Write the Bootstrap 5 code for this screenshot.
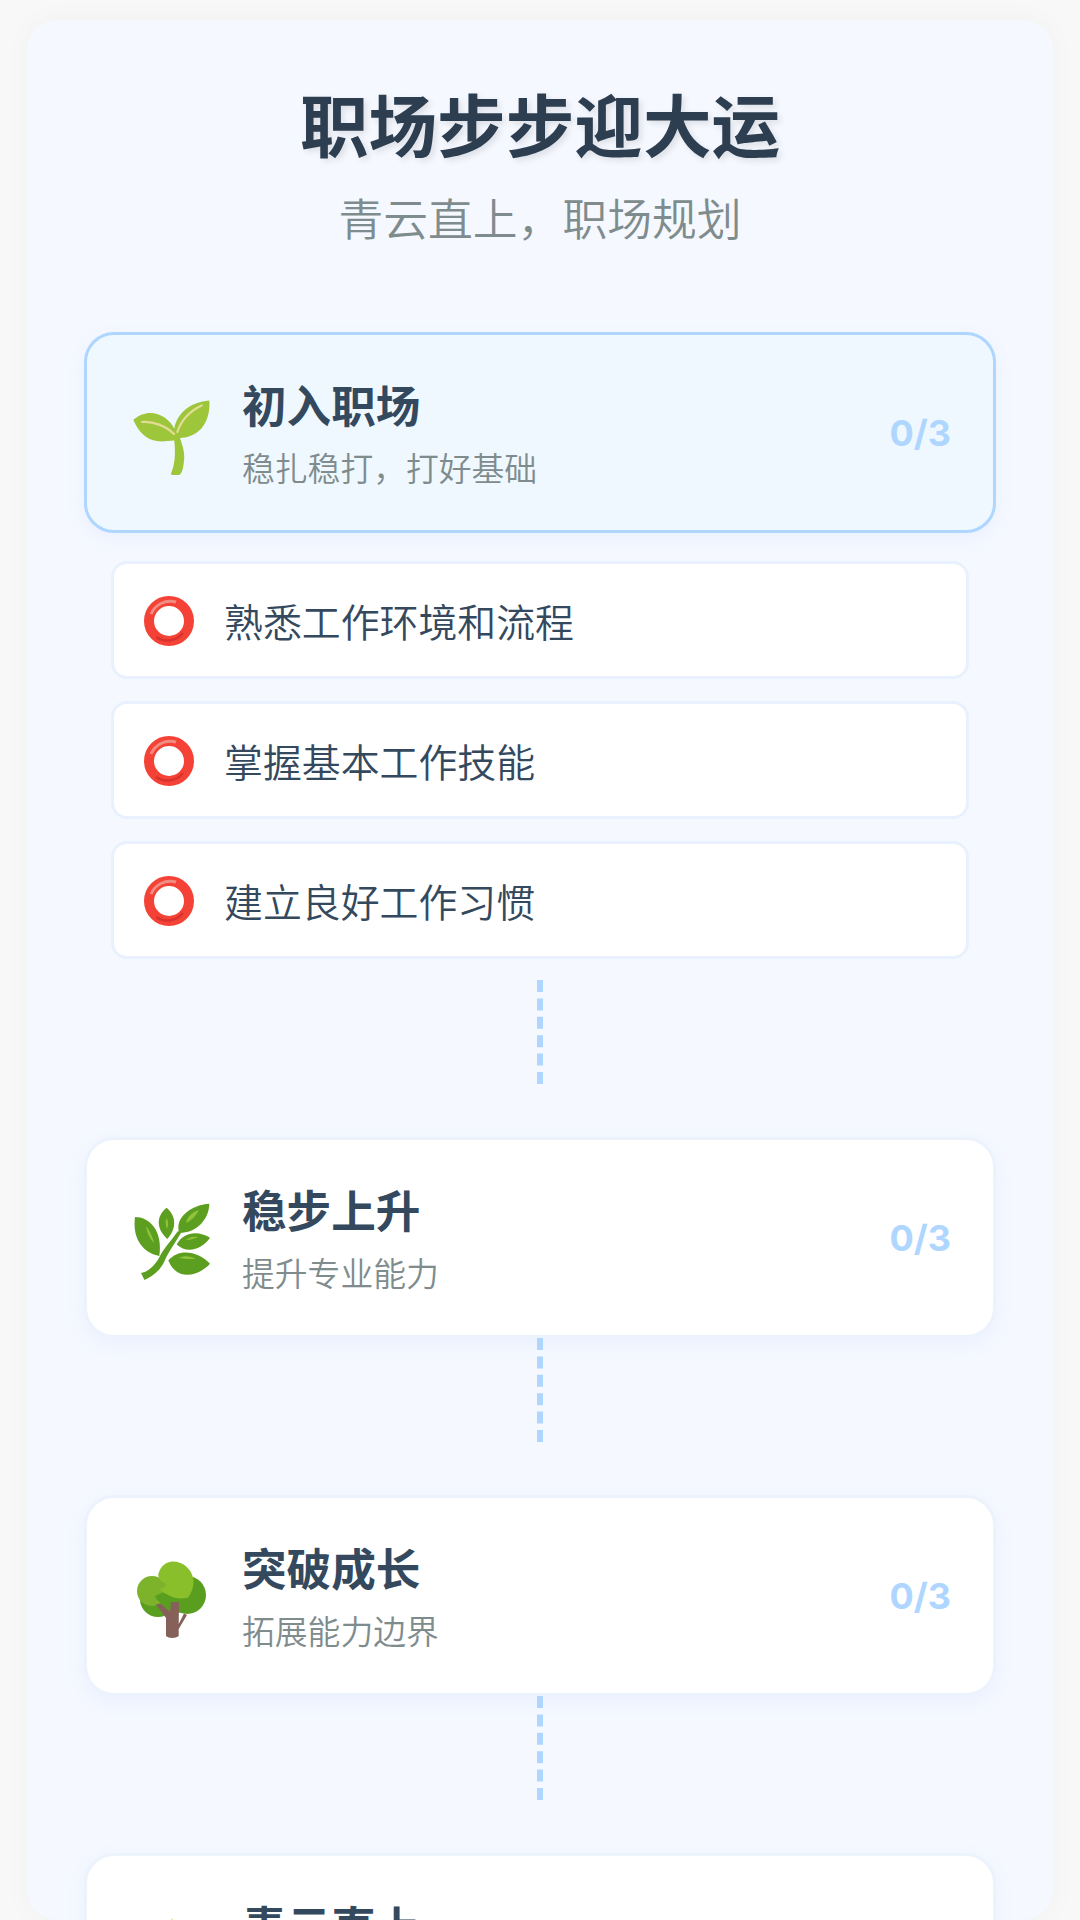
<!DOCTYPE html>
<html lang="zh-CN"><head><meta charset="utf-8">
<link href="https://cdn.jsdelivr.net/npm/bootstrap@5.3.0/dist/css/bootstrap.min.css" rel="stylesheet">
<style>
html,body{height:1920px;overflow:hidden}
body{background:#f8f8f8;font-family:"Noto Sans CJK SC","Noto Sans",sans-serif;font-weight:350;margin:0}
.shell{margin:20px 27px 0;background:#f5f8ff;border-radius:30px;padding:61px 57px 0;box-shadow:0 0 30px rgba(0,0,0,.03);height:1900px;overflow:hidden}
.ttl{font-size:68.6px;font-weight:700;color:#2c3e50;line-height:1.2;text-shadow:3px 3px 6px rgba(0,0,0,.1);margin:0 0 27px;text-align:center}
.sub{font-size:44.8px;color:#7f8c8d;line-height:1.2;text-align:center;margin:0 0 88px}
.stage{height:201px;border-radius:30px;border:3px solid #ecf3fd;background:#fff;padding:0 42px;box-shadow:0 6px 18px rgba(100,150,255,.08)}
.stage.on{background:#f0f8ff;border-color:#aed6ff}
.ico{width:84px;height:84px;flex:none;margin-right:29px}
.st{font-size:44.6px;font-weight:700;color:#34495e;line-height:1.2;margin:-2px 0 16px}
.sd{font-size:32.8px;color:#7f8c8d;line-height:1.2}
.cnt{font-family:Inter,sans-serif;font-size:36px;font-weight:700;color:#aed6ff}
.tasks{padding:28px 27px 0;display:flex;flex-direction:column;gap:22px}
.task{height:118px;background:#fff;border:3px solid #e8f1fd;border-radius:16px;padding:0 28px}
.task svg{width:54px;height:54px;flex:none;margin:2px 28px 0 0}
.task span{font-size:38.9px;color:#34495e}
.link{width:6px;height:104px;border-left:6px dashed #aed6ff;margin:0 auto 53px}
.link.first{margin-top:21px}
</style></head><body>
<div class="shell">
<h1 class="ttl">职场步步迎大运</h1>
<p class="sub">青云直上，职场规划</p>

<div class="stage on d-flex align-items-center">
<svg class="ico" viewBox="0 0 84 84"><path fill="#9dc63b" d="M4.300 28.800C10 24 16 22 21 22C32 22 41 29 45.300 37.800C47 26 58 11 80.300 9.500C81 20 79 30 72 38C66 44 58 47 51 47C54 56 56 62 55 69.500C54.500 76 53 82 51 83.500C47 85 43 84.500 41.700 83C45 76 47 66 45.300 49.500C38 50 33 51 27.700 50C18 49 9 41 4.300 28.800Z"/><path fill="none" stroke="#e3dc94" stroke-width="2.200" stroke-linecap="round" d="M13 31C24 30 37 35 45 43M48.300 41C52 30 61 20 72.700 14.500"/></svg>
<div class="flex-grow-1"><div class="st">初入职场</div><div class="sd">稳扎稳打，打好基础</div></div>
<div class="cnt">0/3</div>
</div>

<div class="tasks">
<div class="task d-flex align-items-center"><svg viewBox="0 0 54 54"><circle cx="27" cy="27" r="20" fill="none" stroke="#f44336" stroke-width="10"/><path d="M41 39A20 20 0 0 1 14 43" fill="none" stroke="#c62828" stroke-width="2.500" opacity=".6"/><path d="M9 20C13 11 23 5 34 8" fill="none" stroke="#f28b82" stroke-width="3"/></svg><span>熟悉工作环境和流程</span></div>
<div class="task d-flex align-items-center"><svg viewBox="0 0 54 54"><circle cx="27" cy="27" r="20" fill="none" stroke="#f44336" stroke-width="10"/><path d="M41 39A20 20 0 0 1 14 43" fill="none" stroke="#c62828" stroke-width="2.500" opacity=".6"/><path d="M9 20C13 11 23 5 34 8" fill="none" stroke="#f28b82" stroke-width="3"/></svg><span>掌握基本工作技能</span></div>
<div class="task d-flex align-items-center"><svg viewBox="0 0 54 54"><circle cx="27" cy="27" r="20" fill="none" stroke="#f44336" stroke-width="10"/><path d="M41 39A20 20 0 0 1 14 43" fill="none" stroke="#c62828" stroke-width="2.500" opacity=".6"/><path d="M9 20C13 11 23 5 34 8" fill="none" stroke="#f28b82" stroke-width="3"/></svg><span>建立良好工作习惯</span></div>
</div>
<div class="link first"></div>

<div class="stage d-flex align-items-center">
<svg class="ico" viewBox="0 0 84 84"><g fill="#5c9e1f"><path d="M6 21C20 21 34 34 30.300 60C15 57 3 44 6 21Z"/><path d="M37.700 11.800C46 19 49 31 38.300 43C27 33 27 20 37.700 11.800Z"/><path d="M80.300 7.800C80 24 67 37 50.300 37C45 22 62 9 80.300 7.800Z"/><path d="M81 41.800C74 52 59 59 47.700 48.500C55 35 70 35 81 41.800Z"/><path d="M81 67.800C70 80 48 86 39.300 64.500C50 52 69 55 81 67.800Z"/><path d="M12 77L15.500 84C24 80 32 74 36 64C39 57 44 50 52 37L49 35C42 45 35 52 31 60C27 68 20 76 12 77Z"/></g><g fill="#8fc33a"><path d="M17 30C20 34 24 41 25 47C21 43 18 37 17 30Z"/><path d="M37.500 22C39.500 25 39.500 29 38 33C36.500 29 36 25 37.500 22Z"/><path d="M70 14C63 16 58 21 57 27C62 25 67 20 70 14Z"/><path d="M57 44C60 41 65 40 69 41C65 43 61 44 57 44Z"/><path d="M50 62C55 59 62 60 67 63C61 63 55 63 50 62Z"/></g></svg>
<div class="flex-grow-1"><div class="st">稳步上升</div><div class="sd">提升专业能力</div></div>
<div class="cnt">0/3</div>
</div>
<div class="link"></div>

<div class="stage d-flex align-items-center">
<svg class="ico" viewBox="0 0 84 84"><ellipse cx="43" cy="42" rx="33" ry="17" fill="#5a9e1f"/><circle cx="29" cy="45" r="18" fill="#5a9e1f"/><circle cx="58" cy="41" r="19" fill="#5a9e1f"/><circle cx="23" cy="37" r="15" fill="#7cb32a"/><path fill="#5a9e1f" d="M26 42c4 10 18 14 38 13l10-8-24-16z"/><path fill="#8abf2c" d="M43.700 7.500c11 0 19 8 20.500 17 1 7-1 13-5 19-6 2-14 1-19-2-4-2-8-4-10-7 5 0 7-2 6-5-4-2-7-5-7-9 2-8 8-13 14.500-13z"/><path fill="#86615a" d="M37 82V64L27 50.500l4.500-1L41 58l1-10h8l-.3 22L55 59.500l3 1.500-8.300 14V82c-3 2.500-10 2.500-12.700 0z"/></svg>
<div class="flex-grow-1"><div class="st">突破成长</div><div class="sd">拓展能力边界</div></div>
<div class="cnt">0/3</div>
</div>
<div class="link"></div>

<div class="stage d-flex align-items-center">
<svg class="ico" viewBox="0 0 84 84"><path fill="#f4e04d" d="M43 6l11 25 28 3-21 18 6 27-24-14-24 14 6-27L4 34l28-3z"/></svg>
<div class="flex-grow-1"><div class="st">青云直上</div><div class="sd">&nbsp;</div></div>
</div>
</div>
</body></html>
